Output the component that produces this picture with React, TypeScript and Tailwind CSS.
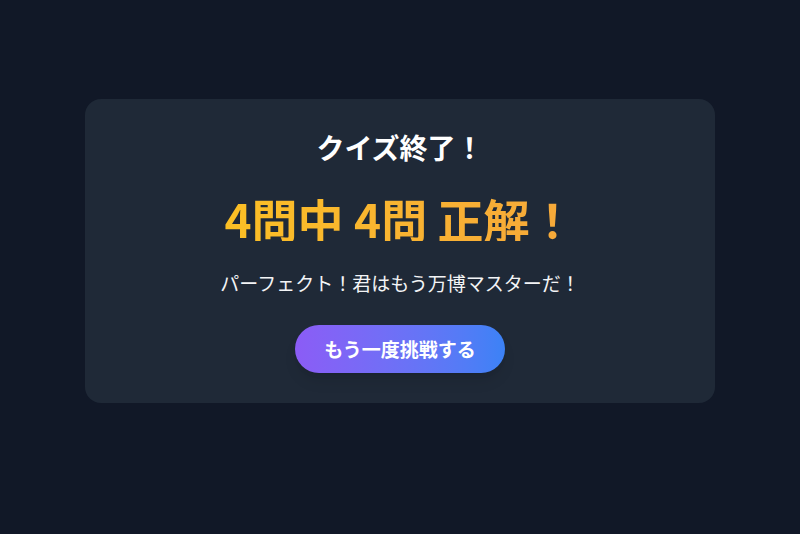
export default function App() {
  return (
    <div
      className="flex min-h-screen items-center justify-center bg-[#111827] px-4 pb-8"
      style={{ fontFamily: '"Noto Sans CJK JP", "Noto Sans", sans-serif' }}
    >
      <div className="flex w-[630px] flex-col items-center rounded-2xl bg-[#1f2937] px-8 pt-8 pb-[30px] text-center">
        {/* Title */}
        <h2 className="text-[28px] leading-8 font-bold text-white">クイズ終了！</h2>

        {/* Score */}
        <p className="mt-8 inline-block bg-gradient-to-r from-[#fbbf24] to-[#f6a83a] bg-clip-text text-[46px] leading-none font-bold text-transparent">
          4問中 4問 正解！
        </p>

        {/* Message */}
        <p className="mt-7 text-[19px] leading-7 text-gray-100">パーフェクト！君はもう万博マスターだ！</p>

        {/* Retry */}
        <button className="mt-7 rounded-full bg-gradient-to-r from-[#8b5cf6] to-[#3b82f6] px-[29px] py-2.5 text-[19px] leading-7 font-bold text-white shadow-lg">
          もう一度挑戦する
        </button>
      </div>
    </div>
  );
}
